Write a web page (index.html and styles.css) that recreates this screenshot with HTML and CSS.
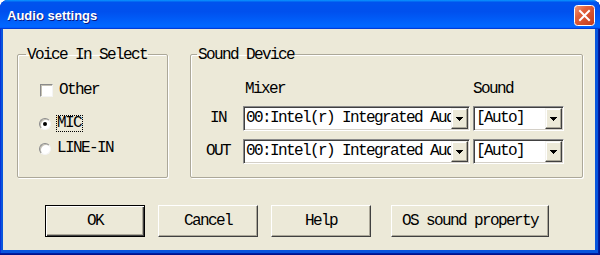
FILE: index.html
```html
<!DOCTYPE html>
<html lang="en">
<head>
  <meta charset="UTF-8" />
  <title>Audio settings</title>
  <link rel="stylesheet" href="styles.css">
</head>
<body>

<div class="window">
  <div class="titlebar">
    <span class="title">Audio settings</span>
    <span class="close">
      <svg width="21" height="21" viewBox="0 0 21 21">
        <defs>
          <linearGradient id="closeFill" x1="0" y1="0" x2="1" y2="1">
            <stop offset="0" stop-color="#F29C7C"/>
            <stop offset="0.35" stop-color="#E2613B"/>
            <stop offset="1" stop-color="#C2391A"/>
          </linearGradient>
        </defs>
        <rect x="0.5" y="0.5" width="20" height="20" rx="3" fill="url(#closeFill)" stroke="#fff"/>
        <path d="M6 6L15 15M15 6L6 15" stroke="#fff" stroke-width="2" stroke-linecap="square"/>
      </svg>
    </span>
  </div>

  <div class="client">
    <div class="groups">
      <fieldset class="group voice">
        <legend>Voice In Select</legend>
        <label class="option check-row"><span class="checkbox"></span><span>Other</span></label>
        <label class="option radio-row mic"><span class="radio checked"></span><span class="focus">MIC</span></label>
        <label class="option radio-row line"><span class="radio"></span><span class="label-text">LINE-IN</span></label>
      </fieldset>

      <fieldset class="group sound">
        <legend>Sound Device</legend>
        <div class="device-grid">
          <span></span>
          <span class="head mixer-head">Mixer</span>
          <span class="head">Sound</span>

          <span class="port">IN</span>
          <div class="combo"><span class="value">00:Intel(r) Integrated Audio</span><span class="arrow"><svg width="7" height="4" viewBox="0 0 7 4"><path d="M0 0h7v1h-1v1h-1v1h-1v1h-1v-1h-1v-1h-1v-1h-1z"/></svg></span></div>
          <div class="combo"><span class="value">[Auto]</span><span class="arrow"><svg width="7" height="4" viewBox="0 0 7 4"><path d="M0 0h7v1h-1v1h-1v1h-1v1h-1v-1h-1v-1h-1v-1h-1z"/></svg></span></div>

          <span class="port">OUT</span>
          <div class="combo"><span class="value">00:Intel(r) Integrated Audio</span><span class="arrow"><svg width="7" height="4" viewBox="0 0 7 4"><path d="M0 0h7v1h-1v1h-1v1h-1v1h-1v-1h-1v-1h-1v-1h-1z"/></svg></span></div>
          <div class="combo"><span class="value">[Auto]</span><span class="arrow"><svg width="7" height="4" viewBox="0 0 7 4"><path d="M0 0h7v1h-1v1h-1v1h-1v1h-1v-1h-1v-1h-1v-1h-1z"/></svg></span></div>
        </div>
      </fieldset>
    </div>

    <div class="buttons">
      <button class="btn default">OK</button>
      <button class="btn">Cancel</button>
      <button class="btn">Help</button>
      <button class="btn wide">OS sound property</button>
    </div>
  </div>
</div>

</body>
</html>
```

FILE: styles.css
```css
* {
  margin: 0;
  padding: 0;
  box-sizing: border-box;
}

body {
  background: #fff;
  width: 600px;
  height: 255px;
  overflow: hidden;
}

.window {
  width: 600px;
  height: 255px;
  display: flex;
  flex-direction: column;
  background: #0855DD;
  border-radius: 8px 8px 0 0;
  box-shadow: inset -1px -1px 0 #00138C, inset -2px -2px 0 #001EA0, inset 1px 0 0 #0831D9;
}

/* title bar */
.titlebar {
  height: 29px;
  display: flex;
  align-items: center;
  justify-content: space-between;
  padding: 0 5px 0 7px;
  border-radius: 8px 8px 0 0;
  background: linear-gradient(180deg, #0997FF, #0053EE 8%, #0050EE 40%, #0066FF 88%, #0066FF 93%, #005BFF 95%, #003DD7 96%, #003DD7);
}

.title {
  font-family: "Liberation Sans", Arial, sans-serif;
  font-weight: bold;
  font-size: 13px;
  color: #fff;
  text-shadow: 1px 1px 0 #0A1883;
  padding-top: 1px;
}

.close {
  display: flex;
  width: 21px;
  height: 21px;
  margin-top: 2px;
}

/* client area */
.client {
  flex: 1;
  margin: 0 5px 5px 3px;
  background: #ECE9D8;
  font-family: "Liberation Mono", "DejaVu Sans Mono", monospace;
  font-size: 16px;
  letter-spacing: -1.6px;
  color: #000;
}

.groups {
  display: flex;
  gap: 22px;
  padding: 16px 0 0 14px;
}

.group {
  height: 133px;
  min-width: 0;
  border: 1px solid #ACA899;
  border-radius: 2px;
  box-shadow: 1px 1px 0 #fff, inset 1px 1px 0 #fff;
  padding: 19px 0 0 8px;
}

.group legend {
  line-height: 16px;
  padding: 2px 1px 0;
}

.voice {
  width: 151px;
}

.sound {
  width: 393px;
  padding: 18px 0 0 6px;
}

/* checkbox and radios */
.option {
  display: flex;
  align-items: center;
  height: 17px;
  line-height: 17px;
}

.check-row {
  margin-left: 14px;
}

.radio-row {
  margin-left: 13px;
}

.mic {
  margin-top: 16px;
}

.line {
  margin-top: 8px;
}

.checkbox {
  width: 13px;
  height: 13px;
  background: #fff;
  border: 1px solid;
  border-color: #8A8A8A #F4F4F4 #F4F4F4 #8A8A8A;
  box-shadow: inset 1px 1px 0 #C4C1B4;
  margin-right: 6px;
}

.radio {
  width: 12px;
  height: 12px;
  border-radius: 50%;
  background: #fff;
  border: 1px solid;
  border-color: #8A8A8A #F4F4F4 #F4F4F4 #8A8A8A;
  box-shadow: inset 1px 1px 0 #C4C1B4;
  margin-right: 5px;
  display: flex;
  align-items: center;
  justify-content: center;
}

.radio.checked::after {
  content: "";
  width: 4px;
  height: 4px;
  border-radius: 50%;
  background: #000;
}

.focus {
  border: 1px dotted #000;
  padding: 0 1px 0 0;
  line-height: 15px;
}

.label-text {
  padding-left: 1px;
}

/* sound device grid */
.device-grid {
  display: grid;
  grid-template-columns: 39px 227px 91px;
  grid-template-rows: 17px 25px 25px;
  column-gap: 3px;
  row-gap: 8px;
  margin-left: 4px;
  align-items: center;
}

.head {
  line-height: 17px;
}

.mixer-head {
  padding-left: 2px;
}

.port {
  text-align: center;
  padding-right: 5px;
  line-height: 17px;
}

.combo {
  height: 25px;
  display: flex;
  background: #fff;
  border: 1px solid;
  border-color: #8A8A8A #FFFFFF #FFFFFF #8A8A8A;
  box-shadow: inset 1px 1px 0 #404040, inset -1px -1px 0 #D4D0C8;
  padding: 1px;
}

.combo .value {
  flex: 1;
  overflow: hidden;
  white-space: nowrap;
  line-height: 21px;
  padding-left: 1px;
}

.combo .arrow {
  width: 17px;
  height: 21px;
  flex-shrink: 0;
  display: flex;
  align-items: center;
  justify-content: center;
  background: #ECE9D8;
  border: 1px solid;
  border-color: #F4F3EE #404040 #404040 #F4F3EE;
  box-shadow: inset -1px -1px 0 #ACA899, inset 1px 1px 0 #fff;
}

.combo .arrow svg {
  fill: #000;
}

/* bottom buttons */
.buttons {
  display: flex;
  gap: 13px;
  margin: 27px 0 0 42px;
}

.btn {
  width: 100px;
  height: 32px;
  font: inherit;
  letter-spacing: -1.6px;
  color: #000;
  background: #ECE9D8;
  border: 1px solid;
  border-color: #FFFFFF #404040 #404040 #FFFFFF;
  box-shadow: inset -1px -1px 0 #ACA899;
  cursor: pointer;
}

.btn.default {
  border-color: #000;
  box-shadow: inset 1px 1px 0 #fff, inset -1px -1px 0 #404040, inset -2px -2px 0 #ACA899;
}

.btn.wide {
  width: 158px;
  margin-left: 7px;
}
```
